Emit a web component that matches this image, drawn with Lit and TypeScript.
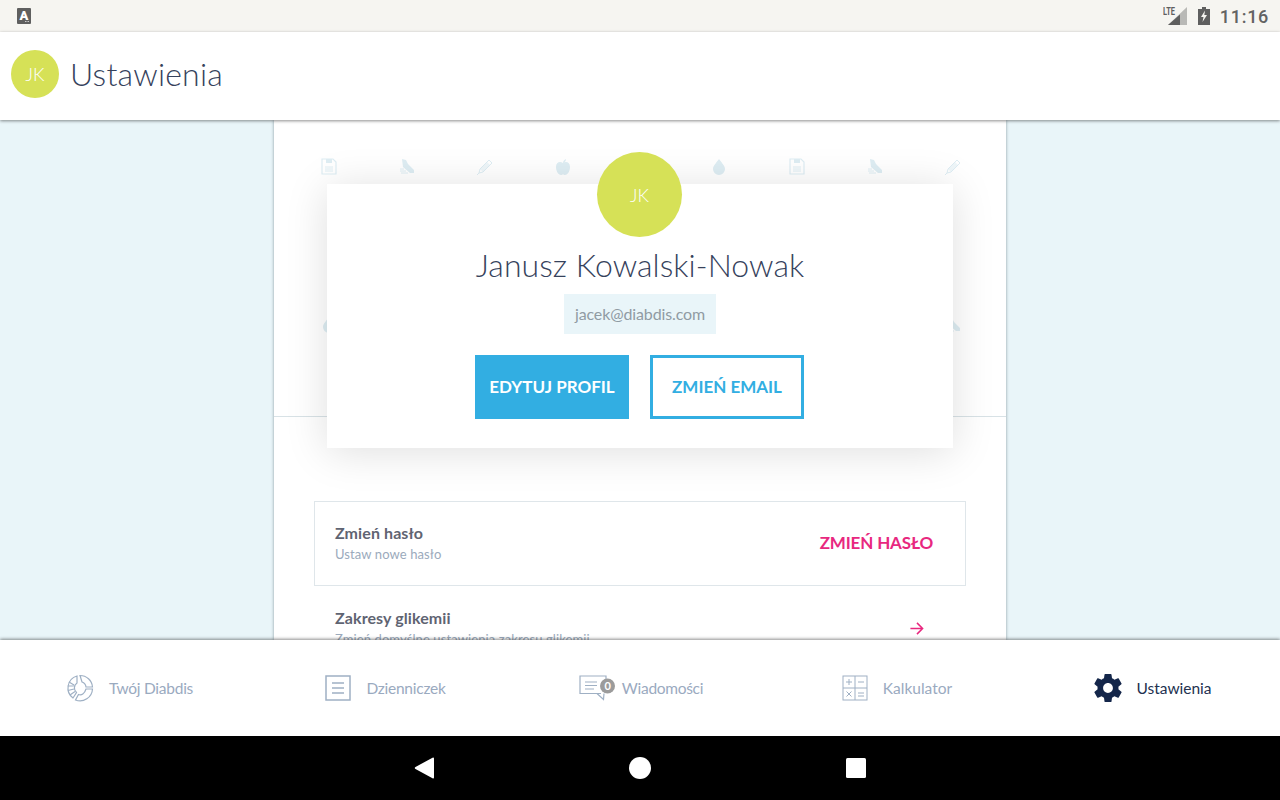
import { LitElement, html, css, svg } from 'lit';
import { customElement } from 'lit/decorators.js';

const noteIcon = svg`<path d="M2 1h11l3 3v12H2z" fill="none" stroke="currentColor" stroke-width="1.2"/><path d="M6 1h6v4H6z" fill="currentColor"/><path d="M5 9h8M5 11h8M5 13h8" stroke="currentColor"/>`;
const shoeIcon = svg`<path d="M4 1l4 1 2 4 6 6v3h-4L5 9z" fill="currentColor"/><path d="M2 11h4M2 13h6M3 15h7" stroke="currentColor"/>`;
const penIcon = svg`<path d="M13 2l3 3-9 9-4 1 1-4z" fill="none" stroke="currentColor"/><path d="M4 11l7-7 3 3-7 7z" fill="currentColor" opacity=".5"/><path d="M3 15l-2 2" stroke="currentColor"/>`;
const appleIcon = svg`<path d="M9 5c3-2 7-1 7 4s-3 8-5 8c-1 0-1-.5-2-.5s-1 .5-2 .5c-2 0-5-3-5-8s4-6 7-4zM9 5c0-2 1-3 3-4 0 2-1 3-3 4z" fill="currentColor"/>`;
const dropIcon = svg`<path d="M9 1c3 4 6 7 6 10a6 6 0 0 1-12 0c0-3 3-6 6-10z" fill="currentColor"/>`;

@customElement('app-root')
export class AppRoot extends LitElement {
  static styles = css`
    :host {
      display: flex;
      flex-direction: column;
      height: 800px;
      overflow: hidden;
      font-family: Lato, sans-serif;
      color: #3b4760;
    }

    .status {
      height: 32px;
      flex: none;
      background: #f6f5f1;
      display: flex;
      align-items: center;
      padding: 0 11px 0 17px;
      color: #5f5f5f;
    }
    .status-a { width: 14px; height: 16px; display: block; }
    .status-right { margin-left: auto; display: flex; align-items: center; }
    .lte { width: 25px; height: 20px; display: block; }
    .battery { width: 12px; height: 18px; margin: 0 0 0 10px; display: block; }
    .time {
      font: 500 18px Roboto, sans-serif;
      letter-spacing: 0.7px;
      margin-left: 10px;
      color: #636363;
    }

    .topbar {
      height: 88px;
      flex: none;
      box-sizing: border-box;
      padding: 0 0 4px 11px;
      background: #fff;
      display: flex;
      align-items: center;
      gap: 12px;
      box-shadow: 0 1px 3px rgba(0, 0, 0, 0.45);
      position: relative;
      z-index: 2;
    }
    .avatar {
      border-radius: 50%;
      background: #d6e157;
      color: #fff;
      display: flex;
      align-items: center;
      justify-content: center;
      font-weight: 300;
    }
    .avatar.small { width: 48px; height: 48px; font-size: 18px; }
    .title { font-size: 32px; font-weight: 300; letter-spacing: 0.2px; margin: -2px 0 0 -1px; color: #36425c; }

    .main {
      flex: 1;
      min-height: 0;
      overflow: hidden;
      background: #e9f5f9;
      display: flex;
      justify-content: center;
    }
    .column {
      width: 732px;
      box-sizing: border-box;
      background: #fff;
      box-shadow: 0 0 3px rgba(60, 80, 90, 0.55);
    }

    .hero {
      position: relative;
      height: 296px;
      border-bottom: 1px solid #d8e2e6;
    }
    .pattern-row {
      position: absolute;
      left: 46px;
      width: 642px;
      display: flex;
      justify-content: space-between;
      color: #deedf3;
    }
    .pattern-row svg { width: 18px; height: 18px; display: block; }
    .pattern-row.one { top: 38px; }
    .pattern-row.two { top: 196px; }

    .card {
      position: absolute;
      top: 64px;
      left: 53px;
      width: 626px;
      height: 264px;
      background: #fff;
      box-shadow: 0 4px 40px rgba(0, 0, 0, 0.13);
      display: flex;
      flex-direction: column;
      align-items: center;
      z-index: 1;
    }
    .avatar.big {
      position: absolute;
      top: -32px;
      left: 270px;
      width: 85px;
      height: 85px;
      font-size: 18px;
    }
    .name {
      margin-top: 62px;
      font-size: 32px;
      line-height: 38px;
      font-weight: 300;
      letter-spacing: 0.05px;
      color: #36425c;
    }
    .email {
      margin-top: 10px;
      width: 152px;
      height: 40px;
      box-sizing: border-box;
      padding-bottom: 2px;
      background: #e9f5f9;
      color: #909ba3;
      font-size: 16px;
      letter-spacing: -0.12px;
      display: flex;
      align-items: center;
      justify-content: center;
    }
    .buttons { display: flex; gap: 21px; margin: 21px 1px 0 0; }
    .btn {
      width: 154px;
      height: 64px;
      box-sizing: border-box;
      padding-bottom: 2px;
      border: 3px solid #32aee2;
      display: flex;
      align-items: center;
      justify-content: center;
      font-size: 17px;
      font-weight: 700;
      color: #32aee2;
    }
    .btn.filled { background: #32aee2; color: #fff; }

    .settings { padding: 84px 40px 0; }
    .row {
      height: 85px;
      box-sizing: border-box;
      padding: 0 32px 2px 20px;
      display: flex;
      align-items: center;
      justify-content: space-between;
      border: 1px solid transparent;
    }
    .row.boxed { border-color: #dfe6ea; }
    .row-title { font-size: 16px; font-weight: 700; color: #5f6472; line-height: 22px; letter-spacing: 0.1px; }
    .row-sub { font-size: 13px; color: #9baabc; line-height: 20px; letter-spacing: 0.1px; }
    .row-action { font-size: 17px; font-weight: 700; color: #e8287f; letter-spacing: -0.15px; }
    .arrow { width: 15px; height: 15px; display: block; margin: 2px 9px 0 0; }

    .nav {
      height: 96px;
      flex: none;
      box-sizing: border-box;
      padding-bottom: 1px;
      background: #fff;
      display: grid;
      grid-template-columns: repeat(5, 1fr);
      box-shadow: 0 -1px 3px rgba(0, 0, 0, 0.45);
      position: relative;
      z-index: 2;
    }
    .nav-item {
      display: flex;
      align-items: center;
      justify-content: center;
      gap: 15px;
      padding-left: 3px;
      font-size: 15.500px;
      letter-spacing: -0.25px;
      color: #9aaabf;
    }
    .nav-item.tight { gap: 6px; padding-left: 2px; letter-spacing: -0.3px; }
    .nav-item.wide { letter-spacing: 0; padding-left: 2px; }
    .nav-item.active { color: #233150; letter-spacing: 0; gap: 14px; padding-left: 2px; }
    .nav-item svg { display: block; }

    .android {
      height: 64px;
      flex: none;
      box-sizing: border-box;
      padding-right: 1px;
      background: #000;
      display: flex;
      align-items: center;
      justify-content: center;
      gap: 192px;
    }
    .android svg { width: 24px; height: 24px; display: block; }
  `;

  private renderPattern(cls: string, icons: unknown[]) {
    return html`<div class="pattern-row ${cls}">
      ${icons.map((i) => html`<svg viewBox="0 0 18 18">${i}</svg>`)}
    </div>`;
  }

  render() {
    const topRow = [noteIcon, shoeIcon, penIcon, appleIcon, dropIcon, dropIcon, noteIcon, shoeIcon, penIcon];
    const lowRow = [dropIcon, noteIcon, shoeIcon, penIcon, appleIcon, dropIcon, noteIcon, penIcon, shoeIcon];
    return html`
      <div class="status">
        <svg class="status-a" viewBox="0 0 14 16">
          <rect width="14" height="16" rx="1" fill="#5f5f5f" />
          <text x="7" y="11.500" text-anchor="middle" font-family="Roboto, sans-serif" font-size="13" font-weight="900" fill="#fff">A</text>
          <path d="M8 13.500h4" stroke="#ccc" stroke-width="1" stroke-dasharray="1 .5" />
        </svg>
        <div class="status-right">
          <svg class="lte" viewBox="0 0 25 20">
            <path d="M24 1v18H5z" fill="#b9b9b6" />
            <path d="M17 8.500V19H5l8-7z" fill="#5f5f5f" />
            <text x="0" y="9" font-family="Roboto, sans-serif" font-size="10" font-weight="700" fill="#5f5f5f" textLength="12" lengthAdjust="spacingAndGlyphs">LTE</text>
          </svg>
          <svg class="battery" viewBox="0 0 12 18">
            <path d="M4 0h4v2h4v16H0V2h4z" fill="#5f5f5f" />
            <path d="M7 3.500L3 10h2.500L4.500 15 9 8H6.300z" fill="#f6f5f1" />
          </svg>
          <span class="time">11:16</span>
        </div>
      </div>

      <div class="topbar">
        <div class="avatar small">JK</div>
        <div class="title">Ustawienia</div>
      </div>

      <div class="main">
        <div class="column">
          <div class="hero">
            ${this.renderPattern('one', topRow)}
            ${this.renderPattern('two', lowRow)}
            <div class="card">
              <div class="avatar big">JK</div>
              <div class="name">Janusz Kowalski-Nowak</div>
              <div class="email">jacek@diabdis.com</div>
              <div class="buttons">
                <div class="btn filled">EDYTUJ PROFIL</div>
                <div class="btn">ZMIEŃ EMAIL</div>
              </div>
            </div>
          </div>
          <div class="settings">
            <div class="row boxed">
              <div>
                <div class="row-title">Zmień hasło</div>
                <div class="row-sub">Ustaw nowe hasło</div>
              </div>
              <div class="row-action">ZMIEŃ HASŁO</div>
            </div>
            <div class="row">
              <div>
                <div class="row-title">Zakresy glikemii</div>
                <div class="row-sub">Zmień domyślne ustawienia zakresu glikemii</div>
              </div>
              <svg class="arrow" viewBox="0 0 16 16" fill="none" stroke="#e8287f" stroke-width="1.600">
                <path d="M1.500 8h13M8.500 2l6 6-6 6" />
              </svg>
            </div>
          </div>
        </div>
      </div>

      <div class="nav">
        <div class="nav-item">
          <svg width="28" height="28" viewBox="0 0 28 28" fill="none" stroke="#9fb0c4" stroke-width="1.200">
            <path d="M11 2a12.500 12.500 0 0 0-4 22l3.500-5.500a6 6 0 0 1 .5-9.500z" />
            <path d="M14 1.500a12.500 12.500 0 0 1 12.500 11.500h-6.500a6 6 0 0 0-4-5z" />
            <path d="M26.500 15a12.500 12.500 0 0 1-17 11l3-5.500c3 1 6-.5 7.500-5.500z" />
            <path d="M3 8l5 3M1.800 12h6M2 16.500l6-1.500M4 21l5-3.500" />
          </svg>
          Twój Diabdis
        </div>
        <div class="nav-item">
          <svg width="26" height="26" viewBox="0 0 26 26" fill="none" stroke="#9fb0c4">
            <rect x="1" y="1" width="24" height="24" stroke-width="1.500" />
            <path d="M7 8h12M7 13h12M7 18h12" stroke-width="1.500" />
          </svg>
          Dzienniczek
        </div>
        <div class="nav-item tight">
          <svg width="37" height="26" viewBox="0 0 37 26" fill="none" stroke="#9fb0c4" stroke-width="1.200">
            <path d="M22 18.500H1V1h26v3" />
            <path d="M18 18.500l6.500 6 .5-6" />
            <path d="M6 7h12M6 10.500h12M6 14h9" />
            <circle cx="28.500" cy="11" r="7.500" fill="#9b9b9b" stroke="none" />
            <text x="28.500" y="15" text-anchor="middle" font-family="Lato, sans-serif" font-size="11" font-weight="700" fill="#fff" stroke="none">0</text>
          </svg>
          Wiadomości
        </div>
        <div class="nav-item wide">
          <svg width="26" height="26" viewBox="0 0 26 26" fill="none" stroke="#9fb0c4">
            <rect x="1" y="1" width="24" height="24" />
            <path d="M13 1v24M1 13h24" />
            <path d="M4 7h6M7 4v6M16 7h6M4.500 16.500l5 5M9.500 16.500l-5 5M16 18h6M16 21h6" />
          </svg>
          Kalkulator
        </div>
        <div class="nav-item active">
          <svg width="28" height="28" viewBox="2 2 20 20">
            <path fill="#14264a" d="M19.430 12.980c.04-.32.070-.64.070-.98s-.03-.66-.07-.98l2.110-1.650c.19-.15.240-.42.120-.64l-2-3.460c-.12-.22-.39-.30-.61-.22l-2.490 1c-.52-.40-1.080-.73-1.690-.98l-.38-2.650A.488.488 0 0 0 14 2h-4c-.25 0-.46.180-.49.420l-.38 2.650c-.61.25-1.170.59-1.690.98l-2.490-1c-.23-.09-.49 0-.61.220l-2 3.460c-.13.220-.07.490.12.640l2.110 1.650c-.04.320-.07.650-.07.980s.03.660.07.980l-2.110 1.650c-.19.150-.24.420-.12.640l2 3.460c.12.220.39.300.61.220l2.490-1c.52.400 1.080.730 1.690.980l.38 2.650c.03.240.24.420.49.420h4c.25 0 .46-.18.49-.42l.38-2.650c.61-.25 1.170-.59 1.690-.98l2.490 1c.23.090.49 0 .61-.22l2-3.460c.12-.22.070-.49-.12-.64l-2.110-1.650zM12 15.500c-1.930 0-3.500-1.570-3.500-3.500s1.570-3.500 3.500-3.500 3.500 1.570 3.500 3.500-1.570 3.500-3.500 3.500z" />
          </svg>
          Ustawienia
        </div>
      </div>

      <div class="android">
        <svg viewBox="0 0 24 24"><path d="M22 2.500v19a1 1 0 0 1-1.500.8L3.500 13a1.200 1.200 0 0 1 0-2L20.500 1.700A1 1 0 0 1 22 2.500z" fill="#fff" /></svg>
        <svg viewBox="0 0 24 24"><circle cx="12" cy="12" r="11" fill="#fff" /></svg>
        <svg viewBox="0 0 24 24"><rect x="2" y="2" width="20" height="20" rx="1.500" fill="#fff" /></svg>
      </div>
    `;
  }
}
